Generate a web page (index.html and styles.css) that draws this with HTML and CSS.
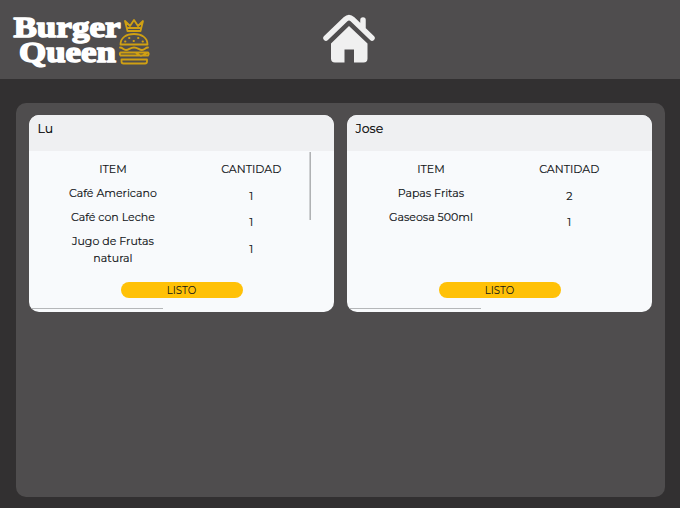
FILE: index.html
```html
<!DOCTYPE html>
<html lang="es">
<head>
<meta charset="utf-8">
<title>Burger Queen</title>
<link rel="stylesheet" href="styles.css">
</head>
<body>
<header class="topbar">
  <svg class="logo" width="140" height="58" viewBox="0 0 140 58">
    <g class="wordmark">
      <text x="1.500" y="25.500" textLength="107" lengthAdjust="spacingAndGlyphs">Burger</text>
      <text x="7" y="51" textLength="97" lengthAdjust="spacingAndGlyphs">Queen</text>
    </g>
    <g class="burger">
      <path d="M113 10l2.500 10h13l2.500-10-5 5-4-6-4 6zM116 17h12"/>
      <path d="M108.500 33.500c0-7 6-10.500 13.500-10.500s13.500 3.500 13.500 10.500z"/>
      <path d="M108 36.500c3 0 3 2.500 6 2.500s4-2.500 8-2.500 5 2.500 8 2.500 3-2.500 6-2.500"/>
      <path d="M108.500 41.500h27.500q1.500 1.500 0 3h-27.500q-1.500-1.500 0-3M124 42l5 3 6-3"/>
      <path d="M109.500 48.500h25.500v2q0 2-2 2h-21.500q-2 0-2-2z"/>
      <path d="M113 30.500h.5M117 27h.5M121.500 30h.5M126 27h.5M130.500 30.500h.5"/>
    </g>
  </svg>
  <svg class="home" width="52" height="50" viewBox="0 0 52 50">
    <path class="roof" d="M3 24L22.500 5.300q3.500-3.400 7 0L49 24M40 14V6"/>
    <path class="house" d="M26 12L44.500 29.500V44.500q0 4-4 4H31V35.500H21.500V48.500H12q-4 0-4-4V29.500z"/>
  </svg>
</header>
<main class="board">
  <article class="card">
    <h2 class="client">Lu</h2>
    <div class="order tall">
      <div class="column items"><span>ITEM</span><span>Café Americano</span><span>Café con Leche</span><span>Jugo de Frutas natural</span></div>
      <div class="column amounts"><span>CANTIDAD</span><b>1</b><b>1</b><b>1</b></div>
    </div>
    <button class="done">LISTO</button>
  </article>
  <article class="card">
    <h2 class="client">Jose</h2>
    <div class="order">
      <div class="column items"><span>ITEM</span><span>Papas Fritas</span><span>Gaseosa 500ml</span></div>
      <div class="column amounts"><span>CANTIDAD</span><b>2</b><b>1</b></div>
    </div>
    <button class="done">LISTO</button>
  </article>
</main>
</body>
</html>
```
FILE: styles.css
```css
* { box-sizing: border-box; }
body {
  margin: 0;
  height: 508px;
  overflow: hidden;
  background: #323031;
  color: #212529;
  font-family: Montserrat, Inter, sans-serif;
}
.topbar {
  display: flex;
  height: 79px;
  padding: 14px 12px;
  background: #4f4d4e;
}
.logo { margin-top: -3px; flex: none; }
.wordmark {
  fill: #fff;
  stroke: #fff;
  stroke-width: 1.5;
  stroke-linejoin: round;
  font: bold 29px "Liberation Serif", serif;
}
.burger {
  fill: none;
  stroke: #d0a013;
  stroke-width: 1.8;
  stroke-linecap: round;
  stroke-linejoin: round;
}
.home { margin-left: 171px; flex: none; }
.roof {
  fill: none;
  stroke: #f0f0f0;
  stroke-width: 5.5;
  stroke-linecap: round;
  stroke-linejoin: round;
}
.house { fill: #f0f0f0; }
.board {
  display: flex;
  align-items: flex-start;
  gap: 13px;
  width: 649px;
  height: 394px;
  margin: 24px 0 0 16px;
  padding: 12px 13px;
  border-radius: 10px;
  background: #4f4d4e;
}
.card {
  position: relative;
  display: flex;
  flex-direction: column;
  width: 305px;
  height: 197px;
  overflow: hidden;
  border-radius: 10px;
  background: #f8fafc;
}
.card::after {
  content: "";
  position: absolute;
  left: 0;
  bottom: 3px;
  width: 134px;
  height: 1px;
  background: #b5b7b9;
}
.client {
  height: 36px;
  margin: 0;
  padding: 5px 8.500px;
  background: #eff0f2;
  color: #000;
  font-size: 12.5px;
  font-weight: 400;
  line-height: 18px;
  -webkit-text-stroke: 0.15px #000;
}
.order {
  position: relative;
  display: flex;
  height: 131px;
  padding: 10px 14px 0 15px;
  color: #101316;
  -webkit-text-stroke: 0.15px #101316;
}
.tall::after {
  content: "";
  position: absolute;
  left: 280px;
  top: 1px;
  width: 2px;
  height: 68px;
  background: linear-gradient(90deg, #cfd1d3 50%, #b0b2b4 50%);
}
.column {
  display: flex;
  flex-direction: column;
  width: 139px;
  font-size: 11px;
  line-height: 17px;
  text-align: center;
}
.items { gap: 7px; padding: 0 20px; }
.amounts { gap: 9.500px; margin-left: 0.6px; }
.amounts b { font-weight: 400; }
.done {
  width: 122px;
  height: 16px;
  margin: 0 0 0 91.500px;
  padding: 0;
  border: 0;
  border-radius: 8px;
  background: #ffc107;
  color: #101316;
  font: 10.2px/17px Montserrat, Inter, sans-serif;
}
```
